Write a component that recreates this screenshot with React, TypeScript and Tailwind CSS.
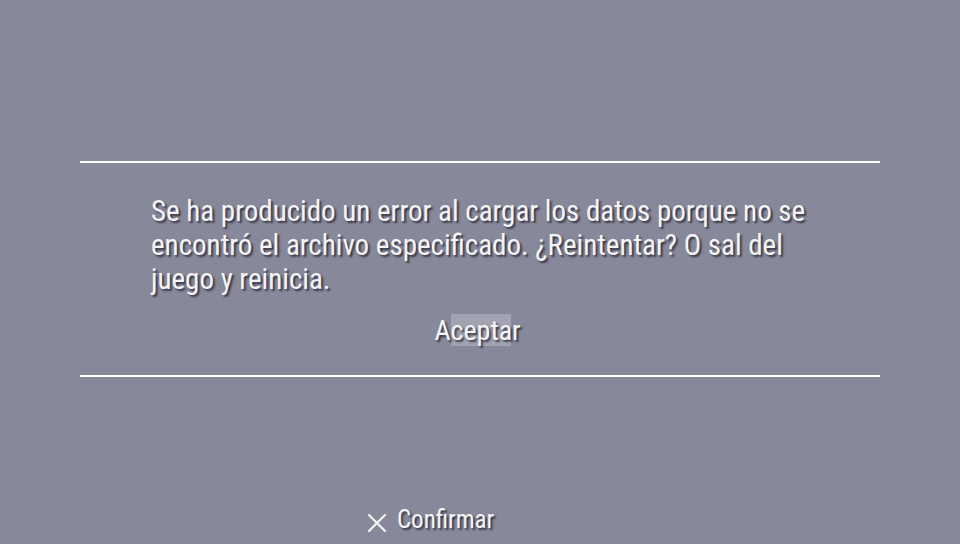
export default function App() {
  const shadow = { textShadow: "2px 2px 2px rgba(40,40,55,0.85)" };
  return (
    <div
      className="w-[960px] h-[544px] bg-[#878899] flex flex-col text-[#f4f4f6] overflow-hidden"
      style={{ fontFamily: "Roboto, 'Liberation Sans', sans-serif", fontStretch: "84%", fontWeight: 450 }}
    >
      <div className="h-[161px] shrink-0" />
      <div className="mx-[80px] h-[2px] bg-white" />
      <div className="pl-[151px] pr-[146px] pt-[31px] text-[29px] leading-[34px]" style={shadow}>
        Se ha producido un error al cargar los datos porque no se encontró el archivo especificado. ¿Reintentar? O sal del juego y reinicia.
      </div>
      <div className="flex justify-center pt-[19px] pr-[5px]">
        <div className="relative text-[28px] leading-[32px]" style={shadow}>
          <span className="absolute left-[17px] top-[-1px] w-[60px] h-[32px] bg-[#a2a3b0]" />
          <span className="relative">Aceptar</span>
        </div>
      </div>
      <div className="h-[28px] shrink-0" />
      <div className="mx-[80px] h-[2px] bg-white" />
      <div className="flex-1" />
      <div className="flex items-center justify-center gap-[9px] pb-[10px] pr-[100px] text-[25px] leading-[28px]" style={shadow}>
        <svg width="22" height="22" viewBox="0 0 22 22" className="mt-[6px]">
          <path d="M3 3 L19 19 M19 3 L3 19" stroke="#f4f4f6" strokeWidth="2.2" strokeLinecap="round" />
        </svg>
        <span>Confirmar</span>
      </div>
    </div>
  );
}
